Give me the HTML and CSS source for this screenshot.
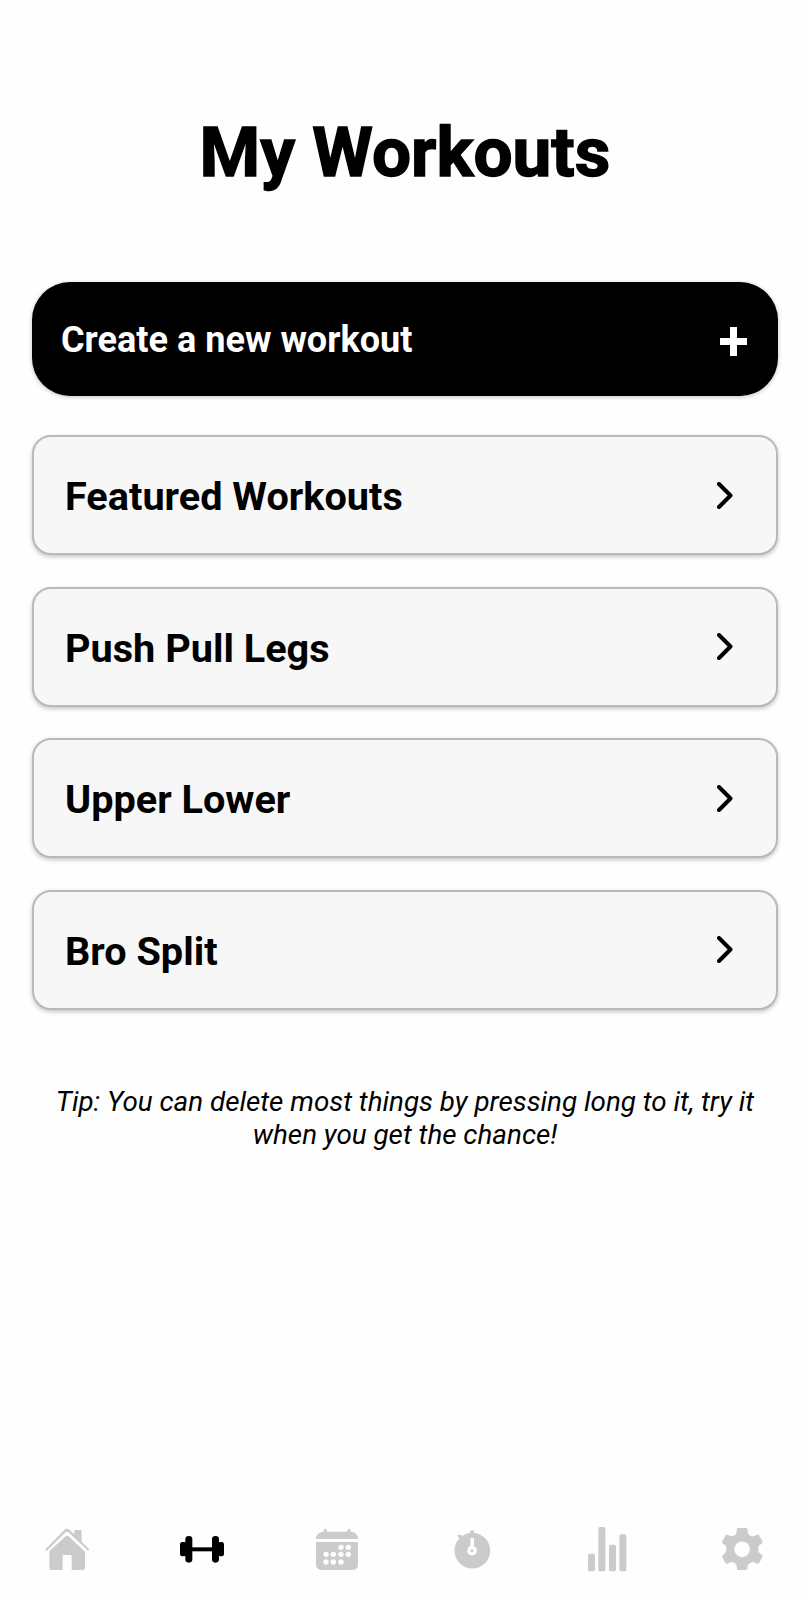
FILE: index.html
```html
<!DOCTYPE html>
<html lang="en">
<head>
<meta charset="utf-8">
<title>My Workouts</title>
<link rel="stylesheet" href="styles.css">
</head>
<body>
<main class="screen">
  <h1 class="title"><span>My Workouts</span></h1>
  <button class="create"><span class="create-label">Create a new workout</span>
    <svg class="plus" viewBox="0 0 27 29"><path d="M10 0h7v11h10v7H17v11h-7V18H0v-7h10z"/></svg>
  </button>
  <ul class="list">
    <li class="card"><span class="label">Featured Workouts</span><svg class="chevron" viewBox="0 0 16 27"><path d="M2 2l11.500 11.500L2 25"/></svg></li>
    <li class="card"><span class="label">Push Pull Legs</span><svg class="chevron" viewBox="0 0 16 27"><path d="M2 2l11.500 11.500L2 25"/></svg></li>
    <li class="card"><span class="label">Upper Lower</span><svg class="chevron" viewBox="0 0 16 27"><path d="M2 2l11.500 11.500L2 25"/></svg></li>
    <li class="card"><span class="label">Bro Split</span><svg class="chevron" viewBox="0 0 16 27"><path d="M2 2l11.500 11.500L2 25"/></svg></li>
  </ul>
  <p class="tip">Tip: You can delete most things by pressing long to it, try it<br>when you get the chance!</p>
  <nav class="tabs">
    <svg class="tab" viewBox="0 0 405 300">
      <path d="M136 148L193 90Q201 83 209 90L223 103V93Q223 90 226 90H242Q245 90 245 93V125L267 147Q268 151 264 152L207 98Q201 93 195 98L141 152Q136 153 136 148Z"/>
      <path d="M148 154L197 109Q201 105 206 109L255 155V202Q255 210 247 210H215V169Q215 165 211 165H192Q188 165 188 169V210H156Q148 210 148 202Z"/>
    </svg>
    <svg class="tab active" viewBox="0 0 405 300">
      <rect x="135" y="126" width="20" height="43" rx="7"/><rect x="151" y="108" width="21" height="80" rx="10"/>
      <rect x="168" y="142" width="68" height="12"/>
      <rect x="231" y="108" width="21" height="80" rx="10"/><rect x="248" y="126" width="19" height="43" rx="7"/>
    </svg>
    <svg class="tab" viewBox="0 0 405 300">
      <path d="M138 117V113Q141 98 158 95H161V91Q161 86 166 86T171 91V95H232V91Q232 86 237 86T242 91V95H245Q261 98 264 113V117Z"/>
      <path d="M138 126H264V191Q264 210 245 210H157Q138 210 138 191Z"/>
      <g class="hole"><circle cx="213" cy="142" r="8"/><circle cx="235" cy="142" r="8"/><circle cx="168" cy="163" r="8"/><circle cx="190" cy="163" r="8"/><circle cx="213" cy="163" r="8"/><circle cx="235" cy="163" r="8"/><circle cx="168" cy="186" r="8"/><circle cx="190" cy="186" r="8"/><circle cx="213" cy="186" r="8"/></g>
    </svg>
    <svg class="tab" viewBox="0 0 405 300">
      <circle cx="202" cy="152" r="53.500"/><rect x="196" y="90" width="11" height="18" rx="5"/>
      <path d="M158 109Q157 103 164 104L174 107L166 118Z"/>
      <g class="hole"><rect x="196" y="113" width="11" height="34" rx="5"/><circle cx="201" cy="152" r="14.500"/></g><circle cx="201" cy="152" r="4.500"/>
    </svg>
    <svg class="tab" viewBox="0 0 405 300">
      <rect x="144" y="161" width="21" height="53" rx="5"/><rect x="175" y="81" width="21" height="133" rx="5"/><rect x="207" y="134" width="21" height="80" rx="5"/><rect x="238" y="103" width="21" height="111" rx="5"/>
    </svg>
    <svg class="tab" viewBox="0 0 405 300">
      <path fill-rule="evenodd" d="M189 84H213Q217 84 217 88L219 100Q220 105 224 106Q231 111 237 108L247 104Q251 103 253 107L262 123Q264 128 260 131L253 136Q250 139 250 143V152Q250 156 253 158L260 164Q264 167 262 171L253 188Q250 192 247 191L235 186Q229 187 222 191Q218 194 218 198L217 206Q216 210 213 210H190Q187 210 186 206L184 195Q183 191 178 189Q172 185 167 187L157 191Q153 192 151 188L142 172Q140 167 144 164L151 158Q154 156 154 152V143Q154 139 151 136L144 131Q140 128 142 123L151 107Q153 103 157 104L167 108Q172 110 178 106Q183 104 184 100L186 88Q186 84 189 84ZM201.500 124.500A23.500 23.500 0 1 0 201.500 171.500A23.500 23.500 0 1 0 201.500 124.500Z"/>
    </svg>
  </nav>
</main>
</body>
</html>
```
FILE: styles.css
```css
* { box-sizing: border-box; }
body { margin: 0; background: #fefefe; font-family: Roboto, "Liberation Sans", sans-serif; color: #000; }
.screen { width: 810px; height: 1600px; display: flex; flex-direction: column; padding-top: 112px; overflow: hidden; }
.title { margin: 0; height: 82px; line-height: 82px; font-size: 69.300px; font-weight: 700; text-align: center; white-space: nowrap; -webkit-text-stroke: 1.400px #000; }
.create { margin: 87.500px 32px 0 31.500px; height: 114px; flex: none; border: 0; border-radius: 38px; background: #000; color: #fff; display: flex; align-items: center; justify-content: space-between; padding: 0 31px 0 29.500px; font: 700 36.100px Roboto, sans-serif; box-shadow: 0 1px 4px rgba(0,0,0,.25); }
.create-label { line-height: 42px; padding-top: 2px; white-space: nowrap; }
.plus { width: 27px; height: 29px; fill: #fff; margin-top: 5px; }
.list { list-style: none; margin: 39.500px 32px 0; padding: 0; display: flex; flex-direction: column; gap: 31.500px; }
.card { height: 120px; border: 2px solid #b9b9b9; border-radius: 19px; background: #f7f7f7; display: flex; align-items: center; justify-content: space-between; padding: 0 43px 0 31px; box-shadow: 0 2px 4px rgba(0,0,0,.22); }
.label { font-size: 39.650px; font-weight: 700; line-height: 48px; padding-top: 4px; white-space: nowrap; }
.chevron { width: 16px; height: 27px; fill: none; stroke: #000; stroke-width: 4; stroke-linecap: round; stroke-linejoin: round; }
.tip { margin: 76.500px 0 0; font-size: 27.800px; line-height: 32.500px; font-style: italic; text-align: center; white-space: nowrap; }
.tabs { display: flex; margin-top: auto; height: 100px; flex: none; }
.tab { width: 135px; height: 100px; fill: #cbcbcb; }
.active { fill: #000; }
.hole { fill: #fefefe; }
```
